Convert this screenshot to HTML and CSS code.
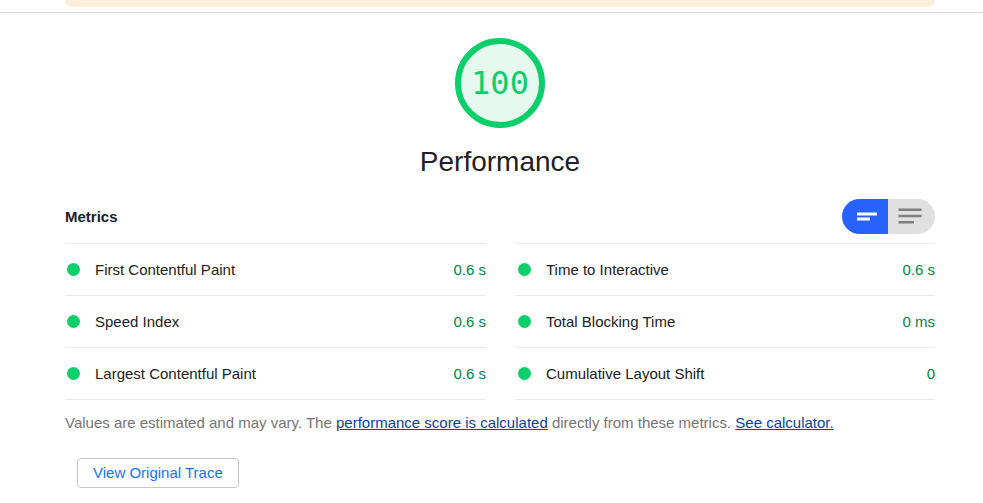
FILE: index.html
```html
<!DOCTYPE html>
<html lang="en">
<head>
  <meta charset="utf-8">
  <meta name="viewport" content="width=device-width, initial-scale=1">
  <title>Performance</title>
  <link rel="stylesheet" href="styles.css">
</head>
<body>
  <header class="topbar">
    <div class="banner"></div>
  </header>
  <main class="category">
    <div class="score">
      <div class="gauge">100</div>
      <h1 class="title">Performance</h1>
    </div>

    <section class="metrics">
      <div class="metrics-header">
        <h2 class="metrics-title">Metrics</h2>
        <div class="toggle" role="radiogroup" aria-label="Metric detail">
          <label class="toggle-option">
            <input class="toggle-input" type="radio" name="view" aria-label="Simple view" checked>
            <svg class="toggle-icon" viewBox="0 0 24 24" aria-hidden="true">
              <path d="M2 7.500h20v3H2zM2 12.500h13v3H2z"/>
            </svg>
          </label>
          <label class="toggle-option">
            <input class="toggle-input" type="radio" name="view" aria-label="Detailed view">
            <svg class="toggle-icon" viewBox="0 0 24 24" aria-hidden="true">
              <path d="M0.500 3.500h23v2.500h-23zM0.500 9.800h23v2.500h-23zM0.500 16h15.500v2.500h-15.500z"/>
            </svg>
          </label>
        </div>
      </div>

      <dl class="metric-grid">
        <div class="metric"><dt class="metric-name">First Contentful Paint</dt><dd class="metric-value">0.6 s</dd></div>
        <div class="metric"><dt class="metric-name">Time to Interactive</dt><dd class="metric-value">0.6 s</dd></div>
        <div class="metric"><dt class="metric-name">Speed Index</dt><dd class="metric-value">0.6 s</dd></div>
        <div class="metric"><dt class="metric-name">Total Blocking Time</dt><dd class="metric-value">0 ms</dd></div>
        <div class="metric"><dt class="metric-name">Largest Contentful Paint</dt><dd class="metric-value">0.6 s</dd></div>
        <div class="metric"><dt class="metric-name">Cumulative Layout Shift</dt><dd class="metric-value">0</dd></div>
      </dl>

      <p class="note">Values are estimated and may vary. The <a class="link" href="#score">performance score is calculated</a> directly from these metrics. <a class="link" href="#calculator">See calculator.</a></p>
      <button class="trace-button" type="button">View Original Trace</button>
    </section>
  </main>
</body>
</html>
```
FILE: styles.css
```css
* {
  box-sizing: border-box;
}

body {
  margin: 0;
  background: #fff;
  color: #212121;
  font: 15px/20px "Liberation Sans", Arial, sans-serif;
}

.topbar {
  padding: 0 48px 5px 65px;
  border-bottom: 1px solid #dadada;
}

.banner {
  height: 7px;
  background: #ffefdb;
  border-radius: 0 0 10px 10px;
}

.category {
  padding: 25px 48px 15px 65px;
}

.score {
  display: flex;
  flex-direction: column;
  align-items: center;
  gap: 16px;
}

.gauge {
  display: grid;
  place-items: center;
  width: 90px;
  height: 90px;
  border: 6px solid #0cce6b;
  border-radius: 50%;
  background: #e6f9ef;
  color: #0cce6b;
  font: 32px/40px "DejaVu Sans Mono", monospace;
}

.title {
  margin: 0;
  font-size: 28px;
  font-weight: 400;
  line-height: 36px;
}

.metrics-header {
  display: flex;
  align-items: center;
  justify-content: space-between;
  padding: 19px 0 9px;
}

.metrics-title {
  margin: 0;
  font-size: 15px;
  font-weight: 700;
}

.toggle {
  display: flex;
  overflow: hidden;
  border-radius: 18px;
}

.toggle-option {
  position: relative;
  display: flex;
  align-items: center;
  padding: 0 9px 0 13px;
  height: 35px;
  background: #e0e0e0;
  cursor: pointer;
}

.toggle-option + .toggle-option {
  padding: 0 13px 0 10px;
}

.toggle-option:has(:checked) {
  background: #2962ff;
}

.toggle-input {
  position: absolute;
  inset: 0;
  margin: 0;
  opacity: 0;
}

.toggle-icon {
  width: 24px;
  height: 24px;
  fill: #7d7d7d;
}

.toggle-input:checked + .toggle-icon {
  fill: #fff;
}

.metric-grid {
  display: grid;
  grid-template-columns: calc(50% - 14px) 1fr;
  column-gap: 30px;
  margin: 0;
}

.metric {
  display: flex;
  align-items: center;
  height: 52px;
  border-top: 1px solid #e8e8e8;
}

.metric:nth-last-child(-n + 2) {
  height: 53px;
  border-bottom: 1px solid #e8e8e8;
}

.metric::before {
  content: "";
  width: 13px;
  height: 13px;
  margin: 0 15px 0 2px;
  border-radius: 50%;
  background: #0cce6b;
}

.metric-name {
  flex: 1;
}

.metric-value {
  margin: 0;
  color: #018642;
}

.note {
  margin: 13px 0 25px;
  color: #757575;
}

.link {
  color: #0d40a0;
}

.trace-button {
  display: block;
  margin-left: 12px;
  padding: 4px 15px;
  border: 1px solid #c8c8c8;
  border-radius: 4px;
  background: #fff;
  color: #1a73e8;
  font: inherit;
  cursor: pointer;
}
```
